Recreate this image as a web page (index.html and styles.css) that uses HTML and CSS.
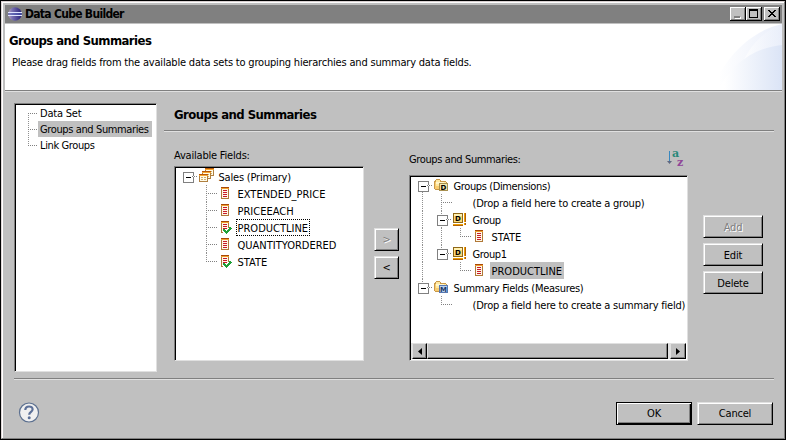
FILE: index.html
```html
<!DOCTYPE html>
<html lang="en">
<head>
<meta charset="utf-8">
<title>Data Cube Builder</title>
<link rel="stylesheet" href="styles.css">
</head>
<body>
<svg class="defs" width="0" height="0" shape-rendering="crispEdges">
  <symbol id="field" viewBox="0 0 16 16">
    <path fill="#b07838" d="M3 1h8v12H3z"/><path fill="#f0a030" d="M3 1h8v2H3z"/><path fill="#a84808" d="M3 1h8v1H3z"/>
    <path fill="#fff8e8" d="M4 3h6v9H4z"/><path fill="#c81828" d="M5 4h4v1H5zM5 6h4v1H5zM5 8h4v1H5zM5 10h4v1H5z"/>
  </symbol>
  <symbol id="checked" viewBox="0 0 16 16">
    <use href="#field"/>
    <path d="M5.500 10l3 3 4.500-5" stroke="#fff" stroke-width="4" fill="none"/>
    <path d="M5.500 9.500l3 3 4.500-5" stroke="#20a038" stroke-width="2.200" fill="none"/>
  </symbol>
  <symbol id="table" viewBox="0 0 9 8">
    <path fill="#b08040" d="M0 0h9v8H0z"/><path fill="#b85808" d="M0 0h9v1H0z"/><path fill="#f8a830" d="M0 1h9v1H0z"/><path fill="#fffbe8" d="M1 2h7v5H1z"/>
    <path fill="#d0b070" d="M2 3h2v1H2zM5 3h2v1H5zM2 5h2v1H2zM5 5h2v1H5z"/>
  </symbol>
  <symbol id="folder" viewBox="0 0 16 16">
    <path fill="#c89848" d="M1 2h1V1h4v1h1v1h5v1h1v8H1v-1H0V3h1z"/>
    <path fill="#ffe8a0" d="M2 2h4v2h6v7H2z"/><path fill="#f8cc70" d="M1 4h1v7H1zM2 8h10v3H2z"/>
    <path fill="#fff6cc" d="M2 4h8v2H2z"/>
  </symbol>
  <symbol id="group" viewBox="0 0 16 16">
    <path fill="#906818" d="M0 1h10v10H0z"/><path fill="#f8d878" d="M1 2h8v8H1z"/><path fill="#fff0b0" d="M1 2h8v2H1z"/>
    <path fill="#f0a000" d="M11 1h2v9h-2zM0 12h10v1H0zM11 11h2v2h-2z"/><path fill="#b06008" d="M12 1h1v9h-1zM0 13h10v1H0zM12 11h1v2h-1z"/>
  </symbol>
</svg>
<div class="window">
  <header class="titlebar">
    <svg class="logo" width="16" height="16" viewBox="0 0 16 16">
      <defs><linearGradient id="orb"><stop offset="0" stop-color="#b8a0c0"/><stop offset=".3" stop-color="#7870b0"/><stop offset="1" stop-color="#28207c"/></linearGradient></defs>
      <circle cx="8" cy="7" r="6.700" fill="url(#orb)"/><path d="M1 5.500h14M1 8.500h14" stroke="#e0e4ff"/><path d="M1 7h14" stroke="#5060b8"/>
    </svg>
    <span class="title">Data Cube Builder</span>
    <svg class="cap" width="16" height="14" viewBox="0 0 16 14" shape-rendering="crispEdges"><path fill="#000" d="M0 0h16v14H0z"/><path fill="#fff" d="M0 0h15v13H0z"/><path fill="#808080" d="M1 1h14v12H1z"/><path fill="#c0c0c0" d="M1 1h13v11H1z"/><path fill="#fff" d="M5 10h6v2H5z"/><path fill="#808080" d="M4 9h6v2H4z"/></svg>
    <svg class="cap" width="16" height="14" viewBox="0 0 16 14" shape-rendering="crispEdges"><path fill="#000" d="M0 0h16v14H0z"/><path fill="#fff" d="M0 0h15v13H0z"/><path fill="#808080" d="M1 1h14v12H1z"/><path fill="#c0c0c0" d="M1 1h13v11H1z"/><path fill="#000" fill-rule="evenodd" d="M3 2h9v9H3zM4 4v6h7V4z"/></svg>
    <svg class="cap close" width="16" height="14" viewBox="0 0 16 14" shape-rendering="crispEdges"><path fill="#000" d="M0 0h16v14H0z"/><path fill="#fff" d="M0 0h15v13H0z"/><path fill="#808080" d="M1 1h14v12H1z"/><path fill="#c0c0c0" d="M1 1h13v11H1z"/><path fill="#000" d="M4 3h2v1H4zM10 3h2v1h-2zM5 4h2v1H5zM9 4h2v1H9zM6 5h4v1H6zM7 6h2v1H7zM6 7h4v1H6zM5 8h2v1H5zM9 8h2v1H9zM4 9h2v1H4zM10 9h2v1h-2z"/></svg>
  </header>
  <section class="banner">
    <div class="intro">
      <h1 class="bold">Groups and Summaries</h1>
      <p class="desc">Please drag fields from the available data sets to grouping hierarchies and summary data fields.</p>
    </div>
    <svg class="swoosh" width="70" height="66" viewBox="0 0 70 66">
      <defs>
        <linearGradient id="s1"><stop offset=".1" stop-color="#fff"/><stop offset="1" stop-color="#e9eefa"/></linearGradient>
        <linearGradient id="s2"><stop offset=".1" stop-color="#fff"/><stop offset="1" stop-color="#dbe4f6"/></linearGradient>
      </defs>
      <path fill="url(#s1)" d="M0 66C12 35 36 8 70 0v66z"/><path fill="url(#s1)" opacity=".6" d="M30 40C38 22 50 8 70 0v40z"/><path fill="url(#s2)" d="M6 66C18 42 40 24 70 21v45z"/>
    </svg>
  </section>
  <main class="body">
    <div class="columns">
      <nav class="sunken nav">
        <div class="row"><i class="g tee first"></i><span class="label">Data Set</span></div>
        <div class="row"><i class="g tee"></i><span class="label sel tight">Groups and Summaries</span></div>
        <div class="row"><i class="g ell"></i><span class="label tight">Link Groups</span></div>
      </nav>
      <section class="page">
        <h2 class="bold">Groups and Summaries</h2>
        <div class="panes">
          <div class="available">
            <div class="caption">Available Fields:</div>
            <div class="sunken fields">
              <div class="row"><i class="g box"></i><svg class="ico top"><use href="#table" x="6" y="0" width="9" height="8"/><use href="#table" x="3" y="3" width="9" height="8"/><use href="#table" x="0" y="6" width="9" height="8"/></svg><span class="label">Sales (Primary)</span></div>
              <div class="row"><i class="g"></i><i class="g tee"></i><svg class="ico"><use href="#field"/></svg><span class="label upper">EXTENDED_PRICE</span></div>
              <div class="row"><i class="g"></i><i class="g tee"></i><svg class="ico"><use href="#field"/></svg><span class="label upper">PRICEEACH</span></div>
              <div class="row"><i class="g"></i><i class="g tee"></i><svg class="ico"><use href="#checked"/></svg><span class="label upper focus">PRODUCTLINE</span></div>
              <div class="row"><i class="g"></i><i class="g tee"></i><svg class="ico"><use href="#field"/></svg><span class="label upper">QUANTITYORDERED</span></div>
              <div class="row"><i class="g"></i><i class="g ell"></i><svg class="ico"><use href="#checked"/></svg><span class="label upper">STATE</span></div>
            </div>
          </div>
          <div class="movers"><button class="btn off">&gt;</button><button class="btn">&lt;</button></div>
          <div class="groups">
            <div class="caption split"><span class="tight">Groups and Summaries:</span>
              <svg class="sort" width="18" height="18" viewBox="0 0 18 18"><path fill="#3888c0" d="M2 1h1v10H2z"/><path fill="#606880" d="M0 11h5l-2.500 3z"/><text x="5" y="7" fill="#288878">a</text><text x="10" y="16" fill="#904898">z</text></svg>
            </div>
            <div class="sunken cube">
              <div class="rows">
                <div class="row"><i class="g box down"></i><svg class="ico"><use href="#folder"/><path fill="#a89050" d="M5 5h9v8H5z"/><path fill="#f4e8b0" d="M6 6h7v6H6z"/><text x="6.500" y="12">D</text></svg><span class="label tight">Groups (Dimensions)</span></div>
                <div class="row"><i class="g v"></i><i class="g tee"></i><i class="ico"></i><span class="label">(Drop a field here to create a group)</span></div>
                <div class="row"><i class="g v"></i><i class="g box up down"></i><svg class="ico"><use href="#group"/><text x="2" y="9">D</text></svg><span class="label tight">Group</span></div>
                <div class="row"><i class="g v"></i><i class="g v"></i><i class="g ell"></i><svg class="ico"><use href="#field"/></svg><span class="label upper">STATE</span></div>
                <div class="row"><i class="g v"></i><i class="g box up"></i><svg class="ico"><use href="#group"/><text x="2" y="9">D</text></svg><span class="label tight">Group1</span></div>
                <div class="row"><i class="g v"></i><i class="g"></i><i class="g ell"></i><svg class="ico"><use href="#field"/></svg><span class="label upper sel">PRODUCTLINE</span></div>
                <div class="row"><i class="g box up"></i><svg class="ico"><use href="#folder"/><path fill="#5878b0" d="M5 5h9v8H5z"/><path fill="#b8d0f0" d="M6 6h7v6H6z"/><text x="6" y="12" fill="#183868">M</text></svg><span class="label measures">Summary Fields (Measures)</span></div>
                <div class="row"><i class="g"></i><i class="g ell"></i><i class="ico"></i><span class="label">(Drop a field here to create a summary field)</span></div>
              </div>
              <div class="scroll">
                <span class="part"><svg width="4" height="7"><path d="M4 0v7L0 3.500z"/></svg></span><span class="part thumb"></span><span class="part right"><svg width="4" height="7"><path d="M0 0v7l4-3.500z"/></svg></span>
              </div>
            </div>
          </div>
          <div class="actions"><button class="btn off">Add</button><button class="btn">Edit</button><button class="btn">Delete</button></div>
        </div>
      </section>
    </div>
    <footer class="footer">
      <svg class="help" width="22" height="22" viewBox="0 0 22 22"><circle cx="11" cy="10.500" r="9.500" fill="#f0f0f0" stroke="#5c7090" stroke-width="1.200"/><path d="M7.300 8C7.300 3.300 14.800 3.500 14.600 7.500c-.1 2.300-3.400 2.500-3.400 5.200" fill="none" stroke="#5c7098" stroke-width="2.200"/><circle cx="11.200" cy="15.700" r="1.500" fill="#5c7098"/></svg>
      <button class="btn ok">OK</button><button class="btn cancel">Cancel</button>
    </footer>
  </main>
</div>
</body>
</html>
```
FILE: styles.css
```css
* { box-sizing: border-box; }
body { margin: 0; width: 786px; height: 440px; overflow: hidden; background: #000; color: #000;
  font: 11px/16px "DejaVu Sans Condensed", "Liberation Sans", sans-serif; font-stretch: condensed; letter-spacing: -0.2px; }
.defs { position: absolute; }
h1, h2, p { margin: 0; }
.window { display: flex; flex-direction: column; width: 784px; height: 438px; margin: 1px; background: #c0c0c0; padding: 2px;
  border: 1px solid; border-color: #d8d0d0 #808080 #808080 #e0d8d8; box-shadow: inset 1px 1px #fff; }
.titlebar { display: flex; align-items: flex-start; height: 18px; background: #808080; margin: 1px 0 0 1px; padding: 2px 2px 0 2px; }
.title { flex: 1; font-size: 12px; font-weight: bold; line-height: 14px; margin-left: 2px; letter-spacing: -0.7px; }
.cap { display: block; }
.close { margin-left: 2px; }
.banner { display: flex; justify-content: space-between; height: 68px; margin: 1px 0 0 1px; background: #fff; border-bottom: 1px solid #e0e0e0; box-shadow: inset 0 -1px #808080; }
.bold { font-size: 13px; font-weight: bold; letter-spacing: -0.56px; }
.intro { padding: 9px 0 0 4px; }
.desc { padding: 6px 0 0 3px; letter-spacing: -0.19px; }
.swoosh { display: block; }
.body { flex: 1; padding: 11px 8px 0 10px; }
.columns { display: flex; gap: 7px; height: 275px; }
.sunken { background: #fff; border: 1px solid; border-color: #808080 #e0e0e0 #e0e0e0 #808080; box-shadow: inset 1px 1px #000; }
.nav { width: 143px; height: 269px; padding: 1px; }
.row { display: flex; height: 17px; padding-left: 2px; }
.nav .row { height: 16px; padding-left: 3px; }
.label { height: 100%; padding: 0 2px; white-space: nowrap; line-height: 19px; margin-left: -0.5px; }
.nav .label { line-height: 18px; margin-left: 0; }
.tight { letter-spacing: -0.38px; }
.measures { letter-spacing: -0.28px; }
.upper { letter-spacing: 0; }
.sel { background: #c0c0c0; }
.nav .sel { padding-right: 3px; }
.focus { outline: 1px dotted #000; outline-offset: -1px; }
.ico { width: 16px; height: 16px; margin: 1px 2px 0; flex: none; shape-rendering: crispEdges; }
.top { margin-top: 0; }
.ico text { font: bold 7px "DejaVu Sans", sans-serif; letter-spacing: 0; }
.g { position: relative; flex: none; width: 19px; height: 100%; }
.v, .tee, .up.down { background: repeating-linear-gradient(#909090 0 1px, #fff 1px 2px) 9px 0 / 1px 100% no-repeat; }
.ell, .up { background: repeating-linear-gradient(#909090 0 1px, #fff 1px 2px) 9px 0 / 1px 9px no-repeat; }
.up.down { background-size: 1px 100%; }
.down:not(.up) { background: repeating-linear-gradient(#909090 0 1px, #fff 1px 2px) 9px 9px / 1px 8px no-repeat; }
.tee::after, .ell::after, .box::after { content: ""; position: absolute; left: 9px; top: 8px; width: 11px; height: 1px;
  background: repeating-linear-gradient(90deg, #808080 0 1px, #fff 1px 2px); }
.nav .g::after { width: 9px; }
.box::after { left: 14px; width: 6px; }
.box::before { content: ""; position: absolute; left: 5px; top: 4px; width: 9px; height: 9px; border: 1px solid #808080;
  background: linear-gradient(#000, #000) center / 5px 1px no-repeat #fff; }
.first { background-position: 9px 8px; }
.page { flex: 1; }
.page h2 { height: 28px; padding: 4px 0 0 10px; border-bottom: 1px solid #808080; box-shadow: 0 1px #e0e0e0; }
.panes { display: flex; padding-left: 10px; }
.caption { height: 19px; line-height: 18px; }
.available { width: 190px; padding-top: 16px; }
.fields { height: 195px; padding: 1px; }
.movers { display: flex; flex-direction: column; gap: 5px; padding: 97px 10px 0; }
.btn { font: inherit; letter-spacing: inherit; color: #000; background: #c0c0c0; padding: 1px 0 0; height: 23px; line-height: 19px; border: 1px solid; border-color: #e0e0e0 #000 #000 #e0e0e0; border-radius: 0;
  box-shadow: inset 1px 1px #fff, inset -1px -1px #808080; }
.off { color: #808080; text-shadow: 1px 1px #fff; }
.movers .btn { width: 25px; padding: 0; }
.groups { width: 279px; padding-top: 17px; }
.split { display: flex; justify-content: space-between; height: 27px; }
.split > span { line-height: 24px; }
.sort { margin: 2px 3px 0 0; overflow: visible; }
.sort text { font: bold 11px/1 "DejaVu Serif", serif; letter-spacing: 0; }
.cube { display: flex; flex-direction: column; justify-content: space-between; height: 186px; padding: 1px; }
.scroll { display: flex; height: 16px; padding-left: 1px; background: #e0e0e0; }
.part { display: flex; align-items: center; justify-content: center; width: 15px; background: #c0c0c0; border: 1px solid; border-color: #e0e0e0 #000 #000 #e0e0e0; box-shadow: inset -1px -1px #808080; }
.thumb { width: 241px; }
.right { margin-left: 2px; width: 16px; }
.actions { display: flex; flex-direction: column; gap: 5px; padding: 84px 0 0 15px; }
.actions .btn { width: 60px; }
.footer { display: flex; align-items: flex-start; gap: 5px; height: 50px; border-top: 1px solid #808080; box-shadow: inset 0 1px #e0e0e0; padding: 23px 1px 0 0; }
.help { margin: 0 auto 0 4px; }
.footer .btn { width: 76px; padding: 0; }
.ok { border-color: #000; box-shadow: inset 1px 1px #fff, inset -1px -1px #000, inset -2px -2px #808080; }
```
